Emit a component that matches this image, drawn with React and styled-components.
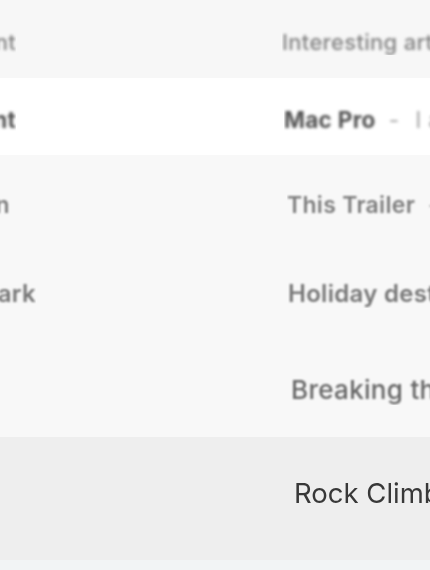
import React from "react";
import styled, { createGlobalStyle } from "styled-components";

const GlobalStyle = createGlobalStyle`
  html, body {
    margin: 0;
    padding: 0;
    background: #f2f4f5;
  }
  body {
    font-family: Inter, "Noto Sans", sans-serif;
    overflow: hidden;
  }
`;

const messages = [
  {
    sender: "Department",
    subject: "Interesting articles",
    height: 78,
    bg: "#f7f7f7",
    size: 22,
    weight: 500,
    color: "#828282",
    blur: 1.5,
    senderEnd: 16,
    subjectX: 282,
    lift: 3,
  },
  {
    sender: "Apple Development",
    subject: "Mac Pro",
    preview: "I am writing to you about",
    height: 77,
    bg: "#ffffff",
    size: 22.5,
    weight: 700,
    color: "#525252",
    blur: 1.5,
    senderEnd: 16,
    subjectX: 284,
    lift: 3,
  },
  {
    sender: "Ethan Harrison",
    subject: "This Trailer",
    preview: "Have you seen it yet",
    height: 92,
    bg: "#f8f8f8",
    size: 23,
    weight: 600,
    color: "#7e7e7e",
    blur: 1.3,
    senderEnd: 10,
    subjectX: 287,
    lift: 4,
  },
  {
    sender: "Jonathan Clark",
    subject: "Holiday destinations",
    height: 93,
    bg: "#f8f8f8",
    size: 24,
    weight: 600,
    color: "#767676",
    blur: 1.2,
    senderEnd: 36,
    subjectX: 288,
    lift: 0,
  },
  {
    sender: "Lisa",
    subject: "Breaking the news",
    height: 97,
    bg: "#f8f8f8",
    size: 26,
    weight: 500,
    color: "#666666",
    blur: 0.9,
    senderEnd: 0,
    subjectX: 291,
    lift: 1,
  },
  {
    sender: "Tom",
    subject: "Rock Climbing",
    height: 123,
    bg: "#eeeeee",
    size: 27.5,
    weight: 400,
    color: "#383838",
    blur: 0.4,
    senderEnd: 0,
    subjectX: 294,
    lift: -6,
  },
];

const List = styled.div`
  display: flex;
  flex-direction: column;
  width: 430px;
  height: 570px;
  overflow: hidden;
`;

const Row = styled.div`
  display: grid;
  grid-template-columns: ${(p) => p.$subjectX}px 1fr;
  align-items: center;
  height: ${(p) => p.$height}px;
  flex: none;
  background: ${(p) => p.$bg};
  padding-top: ${(p) => Math.max(p.$lift, 0) * 2}px;
  padding-bottom: ${(p) => Math.max(-p.$lift, 0) * 2}px;
  box-sizing: border-box;
  overflow: hidden;
  font-size: ${(p) => p.$size}px;
  font-weight: ${(p) => p.$weight};
  color: ${(p) => p.$color};
  white-space: nowrap;
`;

const SenderCell = styled.div`
  display: flex;
  justify-content: flex-end;
  width: ${(p) => p.$end}px;
  overflow: hidden;
`;

const Text = styled.span`
  display: inline-block;
  filter: blur(${(p) => p.$blur}px);
  letter-spacing: ${(p) => (p.$tight ? 0 : 0.3)}px;
`;

const SubjectCell = styled.div`
  display: flex;
  align-items: baseline;
  overflow: hidden;
`;

const Preview = styled(Text)`
  margin-left: 13px;
  font-weight: 400;
  color: #a4a4a4;
`;

const Dash = styled.span`
  margin-right: 16px;
`;

const Footer = styled.div`
  flex: 1;
  background: #f2f4f5;
`;

export default function App() {
  return (
    <>
      <GlobalStyle />
      <List>
        {messages.map((m) => (
          <Row
            key={m.subject}
            $height={m.height}
            $bg={m.bg}
            $size={m.size}
            $weight={m.weight}
            $color={m.color}
            $subjectX={m.subjectX}
            $lift={m.lift}
          >
            <SenderCell $end={m.senderEnd}>
              <Text $blur={m.blur}>{m.sender}</Text>
            </SenderCell>
            <SubjectCell>
              <Text $blur={m.blur} $tight={m.weight < 500}>
                {m.subject}
              </Text>
              {m.preview && (
                <Preview $blur={m.blur}>
                  <Dash>-</Dash>
                  {m.preview}
                </Preview>
              )}
            </SubjectCell>
          </Row>
        ))}
        <Footer />
      </List>
    </>
  );
}
